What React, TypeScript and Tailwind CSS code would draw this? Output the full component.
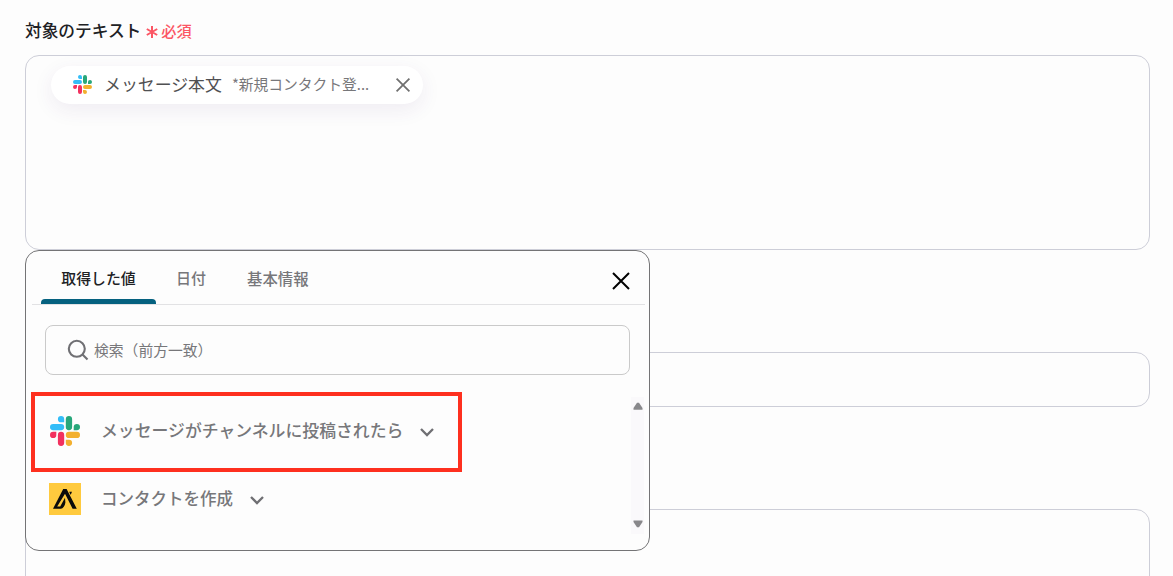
import type { ReactNode } from 'react';

function SlackLogo({ className }: { className: string }) {
  return (
    <svg viewBox="0 0 24 24" className={className}>
      <path fill="#f2315f" d="M5.042 15.165a2.528 2.528 0 0 1-2.52 2.523A2.528 2.528 0 0 1 0 15.165a2.527 2.527 0 0 1 2.522-2.52h2.52v2.52zM6.313 15.165a2.527 2.527 0 0 1 2.521-2.52 2.527 2.527 0 0 1 2.521 2.52v6.313A2.528 2.528 0 0 1 8.834 24a2.528 2.528 0 0 1-2.521-2.522v-6.313z" />
      <path fill="#33bdf8" d="M8.834 5.042a2.528 2.528 0 0 1-2.521-2.52A2.528 2.528 0 0 1 8.834 0a2.528 2.528 0 0 1 2.521 2.522v2.52H8.834zM8.834 6.313a2.528 2.528 0 0 1 2.521 2.521 2.528 2.528 0 0 1-2.521 2.521H2.522A2.528 2.528 0 0 1 0 8.834a2.528 2.528 0 0 1 2.522-2.521h6.312z" />
      <path fill="#27a77a" d="M18.956 8.834a2.528 2.528 0 0 1 2.522-2.521A2.528 2.528 0 0 1 24 8.834a2.528 2.528 0 0 1-2.522 2.521h-2.522V8.834zM17.688 8.834a2.528 2.528 0 0 1-2.523 2.521 2.527 2.527 0 0 1-2.52-2.521V2.522A2.527 2.527 0 0 1 15.165 0a2.528 2.528 0 0 1 2.523 2.522v6.312z" />
      <path fill="#f3b02f" d="M15.165 18.956a2.528 2.528 0 0 1 2.523 2.522A2.528 2.528 0 0 1 15.165 24a2.527 2.527 0 0 1-2.52-2.522v-2.522h2.52zM15.165 17.688a2.527 2.527 0 0 1-2.52-2.523 2.526 2.526 0 0 1 2.52-2.52h6.313A2.527 2.527 0 0 1 24 15.165a2.528 2.528 0 0 1-2.522 2.523h-6.313z" />
    </svg>
  );
}

function ApolloLogo() {
  return (
    <svg viewBox="0 0 32 32" className="h-8 w-8 shrink-0">
      <rect width="32" height="32" fill="#ffca3e" />
      <path fill="#0b0b0b" d="M14.2 6h3.4l10.2 19.8h-4.2L16 10.8 8.2 23.4h3l4.8-8.6.4 4.6c-.6 3.6-2.2 5.8-4.6 6.4H4z" />
      <path fill="#0b0b0b" d="M20.2 8.8h2.8l-1.1 2.6h-.6z" />
    </svg>
  );
}

function Cross({ className }: { className: string }) {
  return (
    <svg viewBox="0 0 20 20" fill="none" stroke="currentColor" className={className}>
      <path d="M2 2l16 16M18 2L2 18" />
    </svg>
  );
}

function Chevron() {
  return (
    <svg viewBox="0 0 14 10" fill="none" stroke="#6f6f73" strokeWidth="2.3" className="mt-0.5 h-2.5 w-3.5 shrink-0">
      <path d="M1 2l6 6 6-6" />
    </svg>
  );
}

function AppRow({ icon, label }: { icon: ReactNode; label: ReactNode }) {
  return (
    <>
      {icon}
      {label}
      <Chevron />
    </>
  );
}

function ValuePicker() {
  return (
    <div className="absolute left-[25px] top-[250px] z-10 flex h-[301px] w-[625px] flex-col rounded-[14px] border border-[#747476] bg-[#fdfdfd]">
      <div className="ml-1.5 mr-1 flex h-[54px] border-b border-[#e2e2e4] pl-[9px]">
        <div className="flex h-[53px] w-[115px] flex-col items-center">
          <span className="mt-[15px] text-[14.9px] font-medium leading-6 text-[#202124]">取得した値</span>
          <span className="mt-auto h-[5px] w-full rounded-t bg-[#05617f]" />
        </div>
        <span className="ml-5 mt-[15px] text-[15px] font-medium leading-6 text-[#77777a]">日付</span>
        <span className="ml-[41px] mt-[15px] text-[15.4px] font-medium leading-6 text-[#77777a]">基本情報</span>
        <Cross className="ml-auto mr-[14.5px] mt-[19.5px] h-5 w-5 stroke-2 text-black" />
      </div>

      <div className="ml-[19px] mt-5 flex h-[50px] w-[585px] items-center rounded-lg border border-[#cacaca] pl-[21px]">
        <svg viewBox="0 0 22 22" fill="none" stroke="#707074" strokeWidth="2.1" className="h-[22px] w-[22px]">
          <circle cx="9.8" cy="9.8" r="8" />
          <path d="M15.5 15.5l5 5" />
        </svg>
        <span className="ml-[5px] text-[14.8px] leading-6 text-[#77777a]">検索（前方一致）</span>
      </div>

      <div className="mt-[17px] flex">
        <div className="flex-1 pl-[5px]">
          <div className="flex h-20 w-[431px] items-center border-4 border-[#fe301f] pb-[2px] pl-[15px]">
            <AppRow
              icon={<SlackLogo className="mr-[21px] h-[30px] w-[30px] shrink-0" />}
              label={<span className="-mt-0.5 mr-[17px] text-[16.85px] font-medium leading-6 text-[#77777a]">メッセージがチャンネルに投稿されたら</span>}
            />
          </div>
          <div className="mt-[11px] flex h-8 items-center pl-[18px]">
            <AppRow
              icon={<span className="mr-5"><ApolloLogo /></span>}
              label={<span className="-mt-0.5 mr-[17px] text-[16.5px] font-medium leading-6 text-[#77777a]">コンタクトを作成</span>}
            />
          </div>
        </div>
        <div className="mr-[5px] mt-[5px] flex h-[137px] w-[13px] flex-col items-center justify-between bg-[#faf9fb] pb-1.5 pt-[5px]">
          <svg viewBox="0 0 10 8" className="h-2 w-2.5" fill="#88888b">
            <path d="M4 .8h2L9.5 6v1.8h-9V6z" />
          </svg>
          <svg viewBox="0 0 10 8" className="h-2 w-2.5" fill="#88888b">
            <path d="M4 7.2h2L9.5 2V.5h-9V2z" />
          </svg>
        </div>
      </div>
    </div>
  );
}

export default function App() {
  return (
    <div className="relative h-[576px] w-[1173px] overflow-hidden bg-[#fdfdfd] pl-[25px] font-['Noto_Sans_CJK_JP',sans-serif]">
      <div className="flex h-[55px] items-center pb-[1px] pt-[6px]">
        <span className="text-[16.7px] font-medium leading-6 text-[#202124]">対象のテキスト</span>
        <svg viewBox="0 0 12 12" className="ml-[5px] mt-1 h-3 w-3" stroke="#fb5664" strokeWidth="2">
          <path d="M6 0v12M.8 3l10.4 6M11.2 3L.8 9" />
        </svg>
        <span className="-mt-px ml-[3px] text-[15.2px] font-medium leading-6 text-[#fb5664]">必須</span>
      </div>

      <div className="h-[195px] w-[1125px] rounded-[14px] border border-[#cdced8] pl-[25px] pt-2.5">
        <div className="flex h-[38px] w-[372px] items-center rounded-full bg-white pb-[2px] pl-[22px] shadow-[0_6px_20px_rgba(80,40,110,0.08)]">
          <SlackLogo className="h-[19px] w-[19px] shrink-0" />
          <span className="-mt-px ml-3 text-[16.9px] leading-6 text-[#505052]">メッセージ本文</span>
          <span className="-mt-px ml-2.5 text-[14.75px] leading-6 text-[#77777a]">*新規コンタクト登...</span>
          <Cross className="ml-auto mr-3 mt-px h-4 w-4 stroke-[2.2] text-[#707070]" />
        </div>
      </div>

      <div className="mt-[102px] h-[55px] w-[1125px] rounded-[14px] border border-[#cdced8]" />
      <div className="mt-[102px] h-[120px] w-[1125px] rounded-[14px] border border-[#cdced8]" />

      <ValuePicker />
    </div>
  );
}
